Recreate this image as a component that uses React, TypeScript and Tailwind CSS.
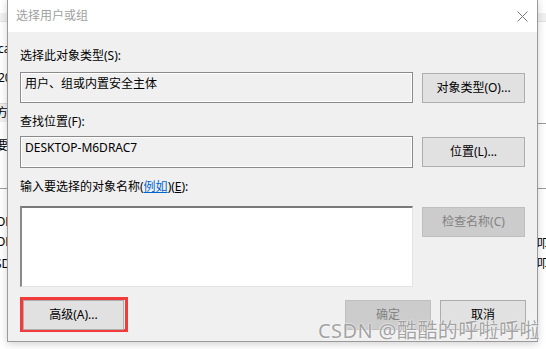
const font = { fontFamily: '"Noto Sans", "Noto Sans CJK SC", sans-serif' };

function WinButton({
  label,
  width,
  disabled,
  className = "",
}: {
  label: React.ReactNode;
  width: string;
  disabled?: boolean;
  className?: string;
}) {
  return (
    <div
      className={
        "flex h-[30px] items-center justify-center border text-[12px] " +
        width +
        " " +
        (disabled
          ? "border-[#bfbfbf] bg-[#cccccc] text-[#838383]"
          : "border-[#adadad] bg-[#e1e1e1] text-black") +
        " " +
        className
      }
    >
      {label}
    </div>
  );
}

function CloseIcon() {
  return (
    <svg width="11" height="11" viewBox="0 0 11 11" className="text-[#7a7a7a]">
      <path d="M0.5 0.5 L10.5 10.5 M10.5 0.5 L0.5 10.5" stroke="currentColor" strokeWidth="1" />
    </svg>
  );
}

function Backdrop() {
  return (
    <div className="absolute inset-0 bg-white text-[12px] text-black">
      <div className="absolute left-0 right-0 top-[13px] h-[9px] border-b border-[#e3e3e3] bg-[#f0f0f0]" />
      <span className="absolute left-[-2px] top-[41px] leading-[16px]">ca</span>
      <span className="absolute left-[-2px] top-[70px] leading-[16px]">20</span>
      <div className="absolute left-0 top-[103px] h-[19px] w-[10px] border-t border-[#d9d9d9] bg-[#f0f0f0]" />
      <span className="absolute left-[-4px] top-[105px] leading-[16px]">方</span>
      <span className="absolute left-[-4px] top-[138px] leading-[16px]">要</span>
      <div className="absolute left-0 top-[188px] h-px w-[10px] bg-[#9a9a9a]" />
      <span className="absolute left-[-4px] top-[214px] leading-[16px]">OR</span>
      <span className="absolute left-[-4px] top-[234px] leading-[16px]">OR</span>
      <span className="absolute left-[-5px] top-[256px] leading-[16px]">SD</span>
      <div className="absolute right-0 top-[123px] h-px w-[12px] bg-[#9a9a9a]" />
      <div className="absolute right-0 top-[188px] h-px w-[12px] bg-[#9a9a9a]" />
      <span className="absolute left-[537px] top-[236px] leading-[16px]">叩</span>
      <span className="absolute left-[537px] top-[256px] leading-[16px]">叩</span>
    </div>
  );
}

export default function App() {
  return (
    <div className="relative h-[349px] w-[546px] overflow-hidden" style={font}>
      <Backdrop />

      <div className="absolute left-[7px] top-[-1px] flex h-[343px] w-[531px] flex-col border border-[#9a9a9a] bg-[#f0f0f0] shadow-[0_2px_8px_rgba(0,0,0,0.18)]">
        <div className="flex h-[32px] items-center justify-between bg-white pl-[8px] pr-[9px]">
          <span className="text-[12px] text-[#a0a0a0]">选择用户或组</span>
          <CloseIcon />
        </div>

        <div className="flex flex-col pl-[12px] pr-[11px] text-[12px] text-black">
          <div className="mt-[16px] h-[16px] leading-[16px]">选择此对象类型(S):</div>
          <div className="mt-[8px] flex items-start gap-[9px]">
            <div className="h-[31px] w-[393px] border border-[#8a8a8a] pl-[4px] pt-[3px] leading-[16px] shadow-[inset_0_0_0_1px_#fff]">
              用户、组或内置安全主体
            </div>
            <WinButton label="对象类型(O)..." width="w-[103px]" className="mt-px" />
          </div>

          <div className="mt-[11px] h-[16px] leading-[16px]">查找位置(F):</div>
          <div className="mt-[6px] flex items-start gap-[9px]">
            <div className="h-[32px] w-[393px] border border-[#8a8a8a] pl-[4px] pt-[3px] leading-[16px] shadow-[inset_0_0_0_1px_#fff]">
              DESKTOP-M6DRAC7
            </div>
            <WinButton label="位置(L)..." width="w-[103px]" className="mt-px" />
          </div>

          <div className="mt-[11px] h-[16px] leading-[16px]">
            输入要选择的对象名称(
            <span className="text-[#0066cc] underline">例如</span>)(<span className="underline">E</span>):
          </div>
          <div className="mt-[11px] flex items-start gap-[9px]">
            <div className="h-[81px] w-[393px] border-b border-l-2 border-r border-t-2 border-b-[#e3e3e3] border-l-[#8a8a8a] border-r-[#e3e3e3] border-t-[#7a7a7a] bg-white" />
            <WinButton label="检查名称(C)" width="w-[103px]" disabled className="mt-px" />
          </div>

          <div className="mt-[10px] flex items-start">
            <div className="h-[35px] w-[108px] border-[3px] border-[#f23b3b]">
              <WinButton label="高级(A)..." width="w-[101px]" className="h-[29px]" />
            </div>
            <WinButton label="确定" width="w-[86px]" disabled className="ml-auto mt-[3px] h-[29px]" />
            <WinButton label="取消" width="w-[86px]" className="ml-[9px] mt-[3px] h-[29px]" />
          </div>
        </div>
      </div>

      <div
        className="pointer-events-none absolute left-[318px] top-[320px] whitespace-nowrap text-[20px] leading-[22px] tracking-[0.4px] text-[#a3a3a3]"
        style={{ textShadow: "0 0 2px #fff, 0 0 1px #fff" }}
      >
        CSDN @酷酷的呼啦呼啦
      </div>
    </div>
  );
}
